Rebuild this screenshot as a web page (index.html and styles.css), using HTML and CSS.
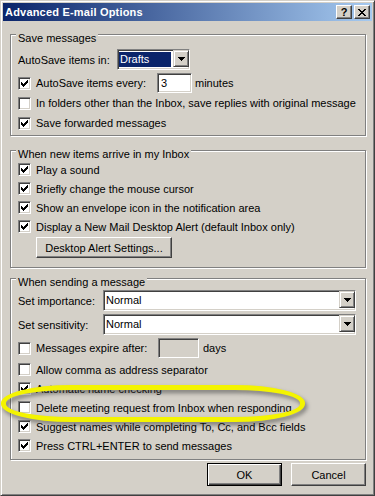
FILE: index.html
```html
<!DOCTYPE html>
<html>
<head>
<meta charset="utf-8">
<title>Advanced E-mail Options</title>
<link rel="stylesheet" href="styles.css">
</head>
<body>
<div class="window">
  <div class="titlebar">
    <span class="title">Advanced E-mail Options</span>
    <div class="tbtns">
      <span class="tbtn help">?</span>
      <span class="tbtn close"><svg width="8" height="7" viewBox="0 0 8 7" shape-rendering="crispEdges"><path d="M0 0h2v1H0zM6 0h2v1H6zM1 1h2v1H1zM5 1h2v1H5zM2 2h4v1H2zM3 3h2v1H3zM2 4h4v1H2zM1 5h2v1H1zM5 5h2v1H5zM0 6h2v1H0zM6 6h2v1H6z"/></svg></span>
    </div>
  </div>

  <div class="content">
    <div class="group g1">
      <div class="gtitle">Save messages</div>
      <div class="row combo-row r-first1">
        <span class="lbl w-in">AutoSave items in:</span>
        <div class="combo combo-small"><span class="sel focused">Drafts</span><span class="dd"><svg width="7" height="4" viewBox="0 0 7 4" shape-rendering="crispEdges"><path d="M0 0h7v1H0zM1 1h5v1H1zM2 2h3v1H2zM3 3h1v1H3z"/></svg></span></div>
      </div>
      <div class="row r-edit1">
        <span class="cb"><svg viewBox="1 1 11 11" width="11" height="11" shape-rendering="crispEdges"><path d="M3 5h1v3H3zM4 6h1v3H4zM5 7h1v3H5zM6 6h1v3H6zM7 5h1v3H7zM8 4h1v3H8zM9 3h1v3H9z"/></svg></span>
        <span class="lbl w-every">AutoSave items every:</span>
        <span class="edit edit-min">3</span>
        <span class="after">minutes</span>
      </div>
      <div class="row">
        <span class="cb"></span>
        <span class="lbl">In folders other than the Inbox, save replies with original message</span>
      </div>
      <div class="row">
        <span class="cb"><svg viewBox="1 1 11 11" width="11" height="11" shape-rendering="crispEdges"><path d="M3 5h1v3H3zM4 6h1v3H4zM5 7h1v3H5zM6 6h1v3H6zM7 5h1v3H7zM8 4h1v3H8zM9 3h1v3H9z"/></svg></span>
        <span class="lbl">Save forwarded messages</span>
      </div>
    </div>

    <div class="group g2">
      <div class="gtitle">When new items arrive in my Inbox</div>
      <div class="row row19 r-first2">
        <span class="cb"><svg viewBox="1 1 11 11" width="11" height="11" shape-rendering="crispEdges"><path d="M3 5h1v3H3zM4 6h1v3H4zM5 7h1v3H5zM6 6h1v3H6zM7 5h1v3H7zM8 4h1v3H8zM9 3h1v3H9z"/></svg></span>
        <span class="lbl">Play a sound</span>
      </div>
      <div class="row row19">
        <span class="cb"><svg viewBox="1 1 11 11" width="11" height="11" shape-rendering="crispEdges"><path d="M3 5h1v3H3zM4 6h1v3H4zM5 7h1v3H5zM6 6h1v3H6zM7 5h1v3H7zM8 4h1v3H8zM9 3h1v3H9z"/></svg></span>
        <span class="lbl">Briefly change the mouse cursor</span>
      </div>
      <div class="row row19">
        <span class="cb"><svg viewBox="1 1 11 11" width="11" height="11" shape-rendering="crispEdges"><path d="M3 5h1v3H3zM4 6h1v3H4zM5 7h1v3H5zM6 6h1v3H6zM7 5h1v3H7zM8 4h1v3H8zM9 3h1v3H9z"/></svg></span>
        <span class="lbl">Show an envelope icon in the notification area</span>
      </div>
      <div class="row row19">
        <span class="cb"><svg viewBox="1 1 11 11" width="11" height="11" shape-rendering="crispEdges"><path d="M3 5h1v3H3zM4 6h1v3H4zM5 7h1v3H5zM6 6h1v3H6zM7 5h1v3H7zM8 4h1v3H8zM9 3h1v3H9z"/></svg></span>
        <span class="lbl">Display a New Mail Desktop Alert (default Inbox only)</span>
      </div>
      <div class="pbtn alert-btn">Desktop Alert Settings...</div>
    </div>

    <div class="group g3">
      <div class="gtitle">When sending a message</div>
      <div class="row combo-row r-first3">
        <span class="lbl w-set">Set importance:</span>
        <div class="combo combo-wide"><span class="sel">Normal</span><span class="dd"><svg width="7" height="4" viewBox="0 0 7 4" shape-rendering="crispEdges"><path d="M0 0h7v1H0zM1 1h5v1H1zM2 2h3v1H2zM3 3h1v1H3z"/></svg></span></div>
      </div>
      <div class="row combo-row r-combo2">
        <span class="lbl w-set">Set sensitivity:</span>
        <div class="combo combo-wide"><span class="sel">Normal</span><span class="dd"><svg width="7" height="4" viewBox="0 0 7 4" shape-rendering="crispEdges"><path d="M0 0h7v1H0zM1 1h5v1H1zM2 2h3v1H2zM3 3h1v1H3z"/></svg></span></div>
      </div>
      <div class="row r-edit2">
        <span class="cb"></span>
        <span class="lbl w-expire">Messages expire after:</span>
        <span class="edit edit-days disabled"></span>
        <span class="after days">days</span>
      </div>
      <div class="row row19 r-after-exp">
        <span class="cb"></span>
        <span class="lbl">Allow comma as address separator</span>
      </div>
      <div class="row row19">
        <span class="cb"><svg viewBox="1 1 11 11" width="11" height="11" shape-rendering="crispEdges"><path d="M3 5h1v3H3zM4 6h1v3H4zM5 7h1v3H5zM6 6h1v3H6zM7 5h1v3H7zM8 4h1v3H8zM9 3h1v3H9z"/></svg></span>
        <span class="lbl">Automatic name checking</span>
      </div>
      <div class="row row19">
        <span class="cb"></span>
        <span class="lbl">Delete meeting request from Inbox when responding</span>
      </div>
      <div class="row row19">
        <span class="cb"><svg viewBox="1 1 11 11" width="11" height="11" shape-rendering="crispEdges"><path d="M3 5h1v3H3zM4 6h1v3H4zM5 7h1v3H5zM6 6h1v3H6zM7 5h1v3H7zM8 4h1v3H8zM9 3h1v3H9z"/></svg></span>
        <span class="lbl">Suggest names while completing To, Cc, and Bcc fields</span>
      </div>
      <div class="row row19">
        <span class="cb"><svg viewBox="1 1 11 11" width="11" height="11" shape-rendering="crispEdges"><path d="M3 5h1v3H3zM4 6h1v3H4zM5 7h1v3H5zM6 6h1v3H6zM7 5h1v3H7zM8 4h1v3H8zM9 3h1v3H9z"/></svg></span>
        <span class="lbl">Press CTRL+ENTER to send messages</span>
      </div>
    </div>

    <div class="buttons">
      <div class="pbtn dlg-btn default">OK</div>
      <div class="pbtn dlg-btn">Cancel</div>
    </div>
  </div>

  <div class="highlight"></div>
</div>
</body>
</html>
```

FILE: styles.css
```css
* { box-sizing: border-box; }

html, body {
  margin: 0;
  padding: 0;
}

body {
  width: 375px;
  height: 496px;
  overflow: hidden;
  background: #d4d0c8;
  font-family: "Liberation Sans", Arial, sans-serif;
  font-size: 11px;
  color: #000;
}

.window {
  position: relative;
  width: 375px;
  height: 496px;
  background: #d4d0c8;
  border: 1px solid;
  border-color: #d4d0c8 #404040 #404040 #d4d0c8;
  box-shadow: inset 1px 1px #fff, inset -1px -1px #808080;
  padding: 2px;
  display: flex;
  flex-direction: column;
}

/* ---------- title bar ---------- */
.titlebar {
  height: 18px;
  flex: none;
  display: flex;
  align-items: center;
  justify-content: space-between;
  padding: 0 2px 0 2px;
  background: linear-gradient(to right, #0a246a, #a6caf0);
}

.title {
  color: #fff;
  font-weight: bold;
  font-size: 11px;
  letter-spacing: 0.2px;
  line-height: 18px;
}

.tbtns {
  display: flex;
  gap: 2px;
}

.tbtn {
  width: 16px;
  height: 14px;
  display: flex;
  align-items: center;
  justify-content: center;
  background: #d4d0c8;
  border: 1px solid;
  border-color: #fff #404040 #404040 #fff;
  box-shadow: inset -1px -1px #808080;
}

.tbtn.help {
  font-weight: bold;
  font-size: 11px;
  line-height: 12px;
  padding-bottom: 1px;
}

.tbtn svg { display: block; fill: #000; }

/* ---------- content ---------- */
.content {
  flex: 1;
  display: flex;
  flex-direction: column;
}

.group {
  width: 356px;
  margin-left: 7px;
  border: 1px solid #808080;
  box-shadow: inset 1px 1px #fff, 1px 1px #fff;
  padding: 0 9px 0 7px;
}

.g1 { margin-top: 13px; padding-bottom: 2px; }
.g2 { margin-top: 14px; padding-bottom: 9px; }
.g3 { margin-top: 10px; padding-bottom: 4px; }

.gtitle {
  width: fit-content;
  height: 13px;
  line-height: 13px;
  margin: -3px 0 0 -2px;
  padding: 0 2px;
  background: #d4d0c8;
  white-space: nowrap;
}

.row {
  display: flex;
  align-items: center;
  height: 20px;
  white-space: nowrap;
}

.row19 { height: 19px; }

.combo-row { height: 21px; }

.r-first1 { margin-top: 4px; }
.r-edit1 { margin-top: 3px; }
.r-first2 { margin-top: -1px; }
.r-first3 { margin-top: 1px; }
.r-combo2 { margin-top: 3px; }
.r-edit2 { margin-top: 3px; }
.r-after-exp { margin-top: 2px; }

.lbl { flex: none; }
.w-in { width: 99px; }
.w-every { width: 121px; }
.w-expire { width: 122px; }
.w-set { width: 85px; }

/* checkbox */
.cb {
  flex: none;
  width: 13px;
  height: 13px;
  margin-right: 5px;
  background: #fff;
  border: 1px solid;
  border-color: #808080 #fff #fff #808080;
  box-shadow: inset 1px 1px #404040, inset -1px -1px #d4d0c8;
}

.cb svg { display: block; fill: #000; }

/* sunken edit box */
.edit {
  flex: none;
  height: 20px;
  padding: 2px 0 0 3px;
  line-height: 14px;
  background: #fff;
  border: 1px solid;
  border-color: #808080 #fff #fff #808080;
  box-shadow: inset 1px 1px #404040, inset -1px -1px #d4d0c8;
}

.edit.disabled { background: #d4d0c8; }

.edit-min { width: 35px; }
.edit-days { width: 41px; }

.after { margin-left: 3px; }
.after.days { margin-left: 4px; }

/* combo box */
.combo {
  flex: none;
  height: 21px;
  display: flex;
  padding: 1px;
  background: #fff;
  border: 1px solid;
  border-color: #808080 #fff #fff #808080;
  box-shadow: inset 1px 1px #404040, inset -1px -1px #d4d0c8;
}

.combo-small { width: 73px; }
.combo-wide { width: 253px; }

.sel {
  flex: 1;
  margin: 0 1px 0 0;
  padding-left: 1px;
  line-height: 17px;
}

.sel.focused {
  background: #0a246a;
  color: #fff;
  margin: 1px 2px 1px 0;
  line-height: 15px;
}

.combo-small .sel { padding-left: 1px; }

.dd {
  flex: none;
  width: 16px;
  height: 17px;
  margin: -1px -1px -1px 0;
  display: flex;
  align-items: center;
  justify-content: center;
  background: #d4d0c8;
  border: 1px solid;
  border-color: #d4d0c8 #404040 #404040 #d4d0c8;
  box-shadow: inset 1px 1px #fff, inset -1px -1px #808080;
}

.dd svg { display: block; fill: #000; }

/* push buttons */
.pbtn {
  display: flex;
  align-items: center;
  justify-content: center;
  background: #d4d0c8;
  border: 1px solid;
  border-color: #fff #404040 #404040 #fff;
  box-shadow: inset -1px -1px #808080;
  white-space: nowrap;
}

.alert-btn {
  width: 136px;
  height: 21px;
  margin: 1px 0 0 18px;
}

.buttons {
  display: flex;
  justify-content: flex-end;
  gap: 9px;
  margin: 3px 6px 0 0;
}

.dlg-btn {
  width: 75px;
  height: 23px;
}

.dlg-btn.default {
  border-color: #000;
  box-shadow: inset 1px 1px #fff, inset -1px -1px #404040, inset -2px -2px #808080;
}

/* yellow annotation ellipse */
.highlight {
  position: absolute;
  left: 0;
  top: 384px;
  width: 304px;
  height: 37px;
  border: 5px solid #f4f400;
  border-radius: 70px / 18px;
  filter: drop-shadow(2px 3px 2px rgba(50, 50, 50, 0.55));
}
```
